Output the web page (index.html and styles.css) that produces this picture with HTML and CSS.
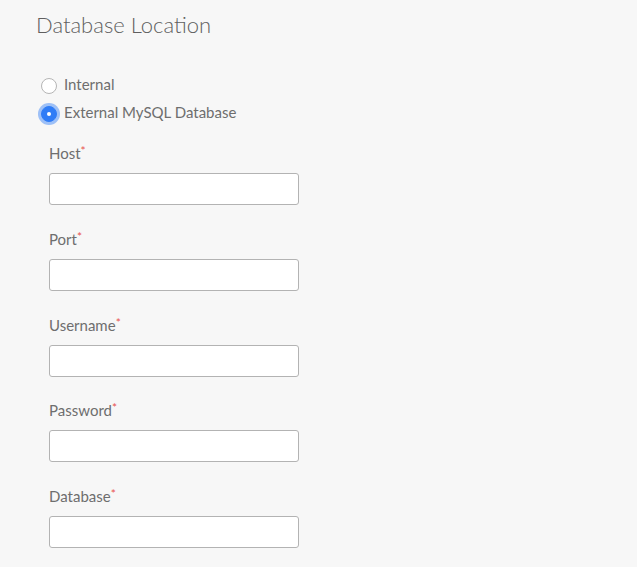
FILE: index.html
```html
<!DOCTYPE html>
<html>
<head>
<meta charset="utf-8">
<link rel="stylesheet" href="styles.css">
</head>
<body>
<div class="page">
  <h1 class="title">Database Location</h1>
  <div class="radios">
    <label class="radio-row"><span class="radio"></span><span class="radio-label">Internal</span></label>
    <label class="radio-row"><span class="radio checked"></span><span class="radio-label">External MySQL Database</span></label>
  </div>
  <div class="fields">
    <div class="field"><div class="field-label">Host<span class="req">*</span></div><div class="input"></div></div>
    <div class="field"><div class="field-label">Port<span class="req">*</span></div><div class="input"></div></div>
    <div class="field"><div class="field-label">Username<span class="req">*</span></div><div class="input"></div></div>
    <div class="field"><div class="field-label">Password<span class="req">*</span></div><div class="input"></div></div>
    <div class="field"><div class="field-label">Database<span class="req">*</span></div><div class="input"></div></div>
  </div>
</div>
</body>
</html>
```

FILE: styles.css
```css
html, body {
  margin: 0;
  background: #f7f7f7;
}
.page {
  padding: 11px 0 0 36px;
  font-family: Lato, "Open Sans", sans-serif;
  color: #666;
}
.title {
  margin: 0;
  font-size: 22px;
  line-height: 28px;
  font-weight: 300;
  color: #5f5f5f;
}
.radios {
  margin-top: 35px;
  display: flex;
  flex-direction: column;
  gap: 8px;
}
.radio-row {
  display: flex;
  align-items: center;
  gap: 7px;
  height: 20px;
  padding-left: 5px;
}
.radio {
  width: 14px;
  height: 14px;
  border: 1px solid #b5b5b5;
  border-radius: 50%;
  background: #fff;
  box-sizing: content-box;
  flex: none;
  position: relative;
  top: 2px;
}
.radio.checked {
  background: #2f7cf6;
  border-color: #2f7cf6;
  box-shadow: 0 0 0 3px rgba(47, 124, 246, 0.45);
}
.radio.checked::after {
  content: "";
  position: absolute;
  left: 5px;
  top: 5px;
  width: 4px;
  height: 4px;
  border-radius: 50%;
  background: #fff;
}
.radio-label {
  font-size: 15px;
  color: #6e6e6e;
}
.fields {
  margin-top: 21px;
  padding-left: 13px;
  display: flex;
  flex-direction: column;
  gap: 23.75px;
}
.field {
  display: flex;
  flex-direction: column;
  gap: 10px;
}
.field-label {
  font-size: 15px;
  line-height: 20px;
  color: #6e6e6e;
}
.req {
  color: #e8534f;
  font-size: 12px;
  vertical-align: top;
  position: relative;
  top: -2px;
}
.input {
  width: 248px;
  height: 30px;
  border: 1px solid #b3b3b3;
  border-radius: 3px;
  background: #fff;
}
```
